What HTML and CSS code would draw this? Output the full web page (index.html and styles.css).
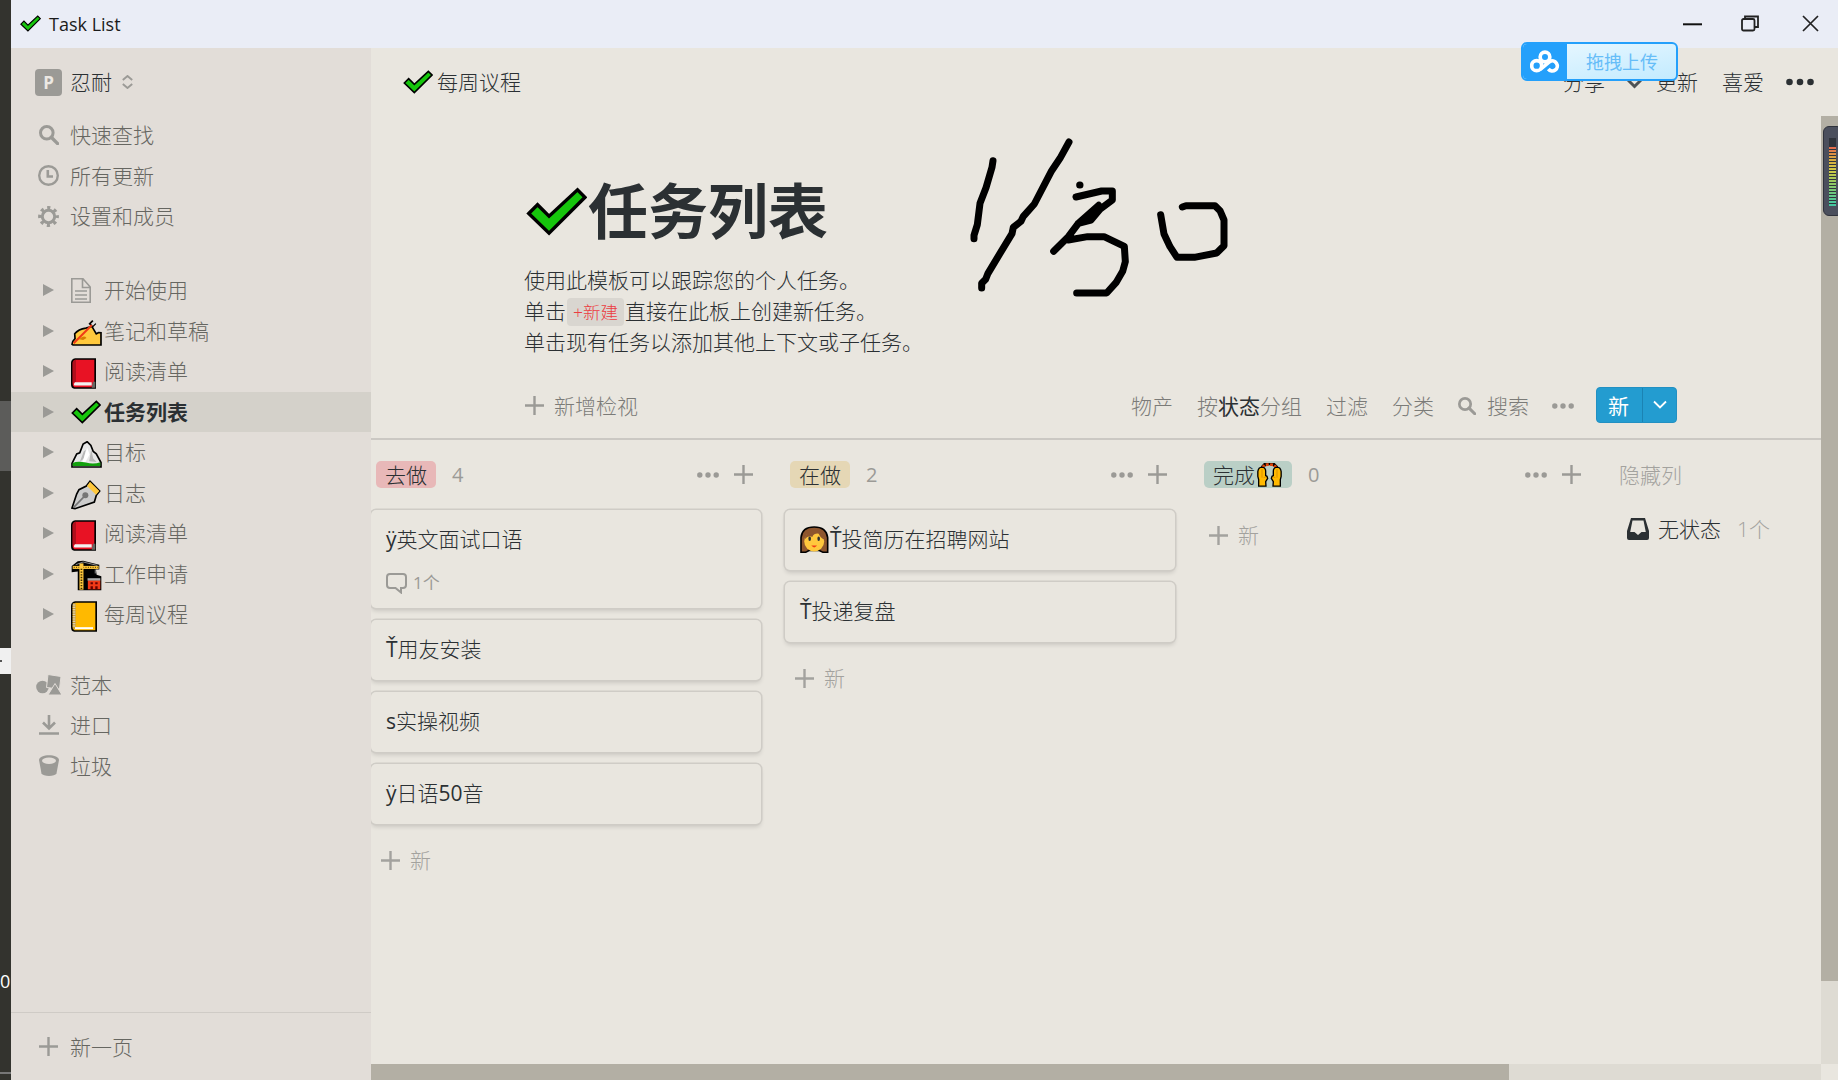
FILE: index.html
```html
<!DOCTYPE html>
<html lang="zh-CN">
<head>
<meta charset="utf-8">
<title>Task List</title>
<link rel="stylesheet" href="styles.css">
</head>
<body>
<svg class="defs" aria-hidden="true">
  <symbol id="check" viewBox="0 0 90 72"><path d="M4 39 17 26 34 43 76 4 87 15 34 68Z" fill="#16c60c" stroke="#000" stroke-width="5"/></symbol>
  <symbol id="plus" viewBox="0 0 19 19"><path d="M9.5 0V19M0 9.5H19" stroke="currentColor" stroke-width="2.4" fill="none"/></symbol>
  <symbol id="dots" viewBox="0 0 22 6"><circle cx="2.8" cy="3" r="2.7"/><circle cx="11" cy="3" r="2.7"/><circle cx="19.2" cy="3" r="2.7"/></symbol>
  <symbol id="search" viewBox="0 0 20 20"><circle cx="7.8" cy="7.8" r="6.3" fill="none" stroke="currentColor" stroke-width="3"/><path d="M12.3 12.3 18.6 18.6" stroke="currentColor" stroke-width="3.4" stroke-linecap="round"/></symbol>
  <symbol id="tri" viewBox="0 0 11 12"><path d="M0 0 11 6 0 12Z"/></symbol>
  <symbol id="book" viewBox="0 0 75 92"><path d="M13 2.5H72.500V89.500H10Q2.500 88 2.500 78V14Q3 4 13 2.500Z" fill="#e81224" stroke="#000" stroke-width="5"/><path d="M5 76V14Q6 6 15 5V71Q8 71 5 76Z" fill="#b00f1c"/><path d="M66 71h7v18h-11Z"/><path d="M12 72H62V82H10Q6 77 12 72Z" fill="#f2f2f2"/></symbol>
  <symbol id="notebook" viewBox="0 0 78 92"><path d="M13 2.500H75.500V89.500H10Q2.500 88 2.500 78V14Q3 4 13 2.500Z" fill="#ffb900" stroke="#000" stroke-width="5"/><path d="M10 6V84" stroke="#cfa030" stroke-width="9"/><path d="M9 10V76" stroke="#ddd" stroke-width="8" stroke-dasharray="3 4"/><path d="M12 78H66V84H12Z" fill="#fff"/></symbol>
  <symbol id="hand" viewBox="0 0 38 72" overflow="visible"><path d="M5 69.500V50L2.500 40V26Q4 13 15 12.500 26 14 26 24V38L30 40 32 46 26 56 27 69.500Z" fill="#ffb900" stroke="#000" stroke-width="4"/><path d="M15 18V44M20 44 26 42" stroke="#d48a00" stroke-width="2.500" fill="none"/></symbol>
</svg>

<div class="screen">
  <aside class="desktop">
    <div class="desk-block"></div>
    <div class="desk-note"></div>
    <div class="desk-count">0</div>
    <div class="desk-line"></div>
  </aside>

  <div class="window">
    <header class="titlebar">
      <svg class="tb-check"><use href="#check"/></svg>
      <span>Task List</span>
      <div class="controls">
        <svg width="19" height="16" viewBox="0 0 19 16"><path d="M0 8.300H19" stroke="#111" stroke-width="2"/></svg>
        <svg width="18" height="17" viewBox="0 0 18 17" fill="none" stroke="#222" stroke-width="1.800"><rect x="1" y="4" width="12.500" height="11.500" rx="1.500"/><path d="M4 4V1.500H17V12H13.500"/></svg>
        <svg width="17" height="17" viewBox="0 0 17 17"><path d="M1 1 16 16M16 1 1 16" stroke="#222" stroke-width="1.700"/></svg>
      </div>
    </header>

    <div class="app">
      <nav class="sidebar">
        <div class="user">
          <b class="avatar">P</b><span>忍耐</span>
          <svg width="11" height="14" viewBox="0 0 11 14" fill="none" stroke="#9b9a96" stroke-width="1.900"><path d="M.8 5 5.500 1 10.200 5M.8 9 5.500 13 10.200 9"/></svg>
        </div>
        <div class="group">
          <div class="row"><span class="ico"><svg width="20" height="20"><use href="#search"/></svg></span>快速查找</div>
          <div class="row"><span class="ico"><svg width="21" height="21" viewBox="0 0 21 21" fill="none" stroke="#9b9a96"><circle cx="10.500" cy="10.500" r="9.300" stroke-width="2.400"/><path d="M9.800 5V11.500H15" stroke-width="2.600"/></svg></span>所有更新</div>
          <div class="row"><span class="ico"><svg width="21" height="21" viewBox="0 0 21 21" fill="none" stroke="#9b9a96"><circle cx="10.500" cy="10.500" r="6.200" stroke-width="3"/><circle cx="10.500" cy="10.500" r="8.800" stroke-width="3.200" stroke-dasharray="3.200 3.710" stroke-dashoffset="1.600"/></svg></span>设置和成员</div>
        </div>
        <div class="group tree">
          <div class="row"><svg class="tri"><use href="#tri"/></svg><span class="emo"><svg width="20" height="25" viewBox="0 0 20 25" fill="none" stroke="#9b9a96" stroke-width="1.600"><path d="M.8.8H12L19.200 9V24.200H.8ZM11.500 1V9.500H19M4 13H16M4 17H16M4 21H16"/></svg></span>开始使用</div>
          <div class="row"><svg class="tri"><use href="#tri"/></svg><span class="emo"><svg width="31" height="27" viewBox="0 0 92 80"><path d="M3 75Q3 66 12 58L11 44Q22 30 44 27L62 22 75 44 82 40 89 41V77H6Z" fill="#ffc83d" stroke="#000" stroke-width="5"/><path d="M24 60Q38 46 46 56L36 62Z" fill="#d67d00"/><path d="M58 20 69 9" stroke="#000" stroke-width="17"/><path d="M8 72 62 18" stroke="#f03a17" stroke-width="6"/><path d="M62 17 71 8" stroke="#ddd" stroke-width="8"/></svg></span>笔记和草稿</div>
          <div class="row"><svg class="tri"><use href="#tri"/></svg><span class="emo"><svg width="25" height="31"><use href="#book"/></svg></span>阅读清单</div>
          <div class="row active"><svg class="tri"><use href="#tri"/></svg><span class="emo"><svg width="30" height="24"><use href="#check"/></svg></span>任务列表</div>
          <div class="row"><svg class="tri"><use href="#tri"/></svg><span class="emo"><svg width="31" height="27" viewBox="0 0 92 80"><path d="M3 66 17 38 26 35 36 9 48 2 59 13 66 31 75 38 89 64V77H3Z" fill="#e8e8e8" stroke="#000" stroke-width="5"/><path d="M38 30 44 26 38 52 26 62ZM60 25 66 52 76 62 54 60Z" fill="#b8b8b8"/><path d="M48 20 55 40 43 62H34Z" fill="#fff"/><path d="M5 65Q20 58 44 64T87 63V74H5Z" fill="#13a10e"/></svg></span>目标</div>
          <div class="row"><svg class="tri"><use href="#tri"/></svg><span class="emo"><svg width="30" height="30" viewBox="0 0 90 90"><path d="M3 84 17 42 24 29 46 18 57 4 86 33 76 46 70 66 12 86Z" fill="#ccc" stroke="#000" stroke-width="5"/><path d="M48 18 57 5 85 33 75 44Z" fill="#ffc83d"/><circle cx="43" cy="46" r="9" fill="#767676"/><path d="M43 46 8 82" stroke="#767676" stroke-width="5"/></svg></span>日志</div>
          <div class="row"><svg class="tri"><use href="#tri"/></svg><span class="emo"><svg width="25" height="31"><use href="#book"/></svg></span>阅读清单</div>
          <div class="row"><svg class="tri"><use href="#tri"/></svg><span class="emo"><svg width="31" height="31" viewBox="0 0 92 92"><path d="M2 18 20 4 36 2 84 14V28H74L76 44 90 48V90H20V34L2 36Z" fill="#000"/><path d="M5 22H82" stroke="#ffc83d" stroke-width="9"/><path d="M8 22H80" stroke="#6b4c00" stroke-width="4" stroke-dasharray="3 4"/><path d="M31 10V88" stroke="#ffc83d" stroke-width="12"/><path d="M31 26V86" stroke="#3b2b00" stroke-width="5" stroke-dasharray="4 4"/><path d="M14 14 36 6 78 16M72 28V40" stroke="#ccc" stroke-width="2" fill="none"/><path d="M50 60H87V87H50Z" fill="#f03a17"/><path d="M49 54H87V61H49Z" fill="#aaa"/><path d="M58 66h7v6h-7zM72 66h7v6h-7zM58 78h7v8h-7zM72 78h7v8h-7z" fill="#600"/></svg></span>工作申请</div>
          <div class="row"><svg class="tri"><use href="#tri"/></svg><span class="emo"><svg width="26" height="31"><use href="#notebook"/></svg></span>每周议程</div>
        </div>
        <div class="group tools">
          <div class="row"><span class="ico"><svg width="25" height="21" viewBox="0 0 25 21" fill="#9b9a96"><circle cx="6.500" cy="13" r="6.300"/><path d="M12 .5 25 2.500 23.500 15 10.500 13.500Z" stroke="#e2ddd8"/><path d="M19 9.500 26 21H12Z" stroke="#e2ddd8"/></svg></span>范本</div>
          <div class="row"><span class="ico"><svg width="20" height="20" viewBox="0 0 20 20" fill="none" stroke="#9b9a96" stroke-width="2.600"><path d="M10 0V13M4 7.500 10 13.500 16 7.500M0 18.500H20"/></svg></span>进口</div>
          <div class="row"><span class="ico"><svg width="20" height="21" viewBox="0 0 20 21"><path d="M0 5C0-1.500 20-1.500 20 5L17.500 18.500C16 21.700 4 21.700 2.500 18.500Z" fill="#9b9a96"/><ellipse cx="10" cy="5.700" rx="7" ry="3.200" fill="#e2ddd8"/></svg></span>垃圾</div>
        </div>
        <div class="new-page"><svg width="19" height="19"><use href="#plus"/></svg>新一页</div>
      </nav>

      <main class="main">
        <div class="topbar">
          <svg width="30" height="24"><use href="#check"/></svg><span class="crumb">每周议程</span>
          <div class="actions">
            <span>分享</span>
            <svg width="17" height="11" viewBox="0 0 17 11"><path d="M2 2 8.500 8.500 15 2" fill="none" stroke="#4e5254" stroke-width="3"/></svg>
            <span>更新</span><span class="fav">喜爱</span>
            <svg width="28" height="8" viewBox="0 0 28 8"><circle cx="3.500" cy="4" r="3.300"/><circle cx="14" cy="4" r="3.300"/><circle cx="24.500" cy="4" r="3.300"/></svg>
          </div>
        </div>

        <div class="scroll">
          <div class="content">
            <section class="intro">
              <h1><svg width="61" height="49"><use href="#check"/></svg>任务列表</h1>
              <p>使用此模板可以跟踪您的个人任务。</p>
              <p>单击<code>+新建</code>直接在此板上创建新任务。</p>
              <p>单击现有任务以添加其他上下文或子任务。</p>
            </section>

            <div class="toolbar">
              <div class="add"><svg width="19" height="19"><use href="#plus"/></svg>新增检视</div>
              <div class="filters">
                <span>物产</span><span>按<em>状态</em>分组</span><span>过滤</span><span>分类</span>
                <span class="find"><svg width="18" height="18"><use href="#search"/></svg>搜索</span>
                <svg class="more" width="22" height="6"><use href="#dots"/></svg>
                <div class="new"><span>新</span><i><svg width="14" height="9" viewBox="0 0 14 9"><path d="M1 1.500 7 7.500 13 1.500" fill="none" stroke="#fff" stroke-width="1.800"/></svg></i></div>
              </div>
            </div>

            <div class="board">
              <section class="col">
                <header><span class="tag red">去做</span><span class="n">4</span><svg class="dots"><use href="#dots"/></svg><svg width="19" height="19"><use href="#plus"/></svg></header>
                <article class="card"><b>ÿ</b>英文面试口语
                  <footer><svg width="21" height="21" viewBox="0 0 21 21" fill="none" stroke="#9b9a96" stroke-width="2"><path d="M4 1H17Q20 1 20 4V12Q20 15 17 15H15V19.500L9.500 15H4Q1 15 1 12V4Q1 1 4 1Z"/></svg>1个</footer>
                </article>
                <article class="card"><b>Ť</b>用友安装</article>
                <article class="card"><b>s</b>实操视频</article>
                <article class="card"><b>ÿ</b>日语<b>50</b>音</article>
                <div class="more-row"><svg width="19" height="19"><use href="#plus"/></svg>新</div>
              </section>
              <section class="col">
                <header><span class="tag yellow">在做</span><span class="n">2</span><svg class="dots"><use href="#dots"/></svg><svg width="19" height="19"><use href="#plus"/></svg></header>
                <article class="card"><svg class="girl" width="29" height="27" viewBox="0 0 90 84"><path d="M3 82V36Q6 3 44 3T86 36V82H72L60 76H28L17 82Z" fill="#8e562e" stroke="#000" stroke-width="5"/><ellipse cx="44" cy="48" rx="31" ry="31" fill="#ffc83d"/><path d="M14 42Q20 14 44 14T76 42Q64 38 58 24 44 22 38 34 26 28 14 42Z" fill="#8e562e"/><ellipse cx="30" cy="40" rx="4" ry="7"/><ellipse cx="58" cy="40" rx="4" ry="7"/><path d="M35 61H53Q44 72 35 61Z" fill="#f03a17"/></svg><b>Ť</b>投简历在招聘网站</article>
                <article class="card"><b>Ť</b>投递复盘</article>
                <div class="more-row"><svg width="19" height="19"><use href="#plus"/></svg>新</div>
              </section>
              <section class="col">
                <header><span class="tag green">完成<svg width="25" height="24" viewBox="0 0 75 72"><path d="M15 14 24 4 36 1 50 4 60 14" fill="none" stroke="#000" stroke-width="10"/><path d="M16 13 24 6 36 4 50 6 58 13" fill="none" stroke="#e0450a" stroke-width="8" stroke-dasharray="9 4"/><use href="#hand" width="38" height="72"/><use href="#hand" width="38" height="72" transform="matrix(-1 0 0 1 75 0)"/></svg></span><span class="n">0</span><svg class="dots"><use href="#dots"/></svg><svg width="19" height="19"><use href="#plus"/></svg></header>
                <div class="more-row"><svg width="19" height="19"><use href="#plus"/></svg>新</div>
              </section>
              <section class="hidden-col">
                <h2>隐藏列</h2>
                <div class="none"><svg width="22" height="22" viewBox="0 0 22 22"><path d="M4 0H18L22 13V20Q22 22 20 22H2Q0 22 0 20V13ZM5.500 2.500 3.200 14H7.500L11 17 14.500 14H18.800L16.500 2.500Z" fill="#2b3033" fill-rule="evenodd"/></svg>无状态<span>1个</span></div>
              </section>
            </div>
          </div>
          <div class="vbar"><i></i></div>
          <div class="hbar"><i></i></div>
          <div class="corner"></div>
        </div>
      </main>
    </div>
  </div>

  <svg class="ink" viewBox="0 0 960 600" fill="none" stroke="#000" stroke-width="21" stroke-linecap="round" stroke-linejoin="round">
    <path d="M159 152 156 172 138 233 120 280 112 344 102 376V386"/>
    <path d="M387 96 360 145 335 182 283 282 250 319 243 334 220 352 216 371 180 430 144 490 137 508 125 520V534"/>
    <path d="M419 225H420M408 261 485 243H517V270L480 298 453 330 415 340M476 286 415 340 385 380 341 424M385 390 443 380H492L553 409 556 455 548 484 528 518 500 549H410"/>
    <path d="M662 314 672 372 690 410 711 442H763L830 429 852 407V330L840 302 825 287H738L727 291"/>
  </svg>

  <div class="upload">
    <div class="cloud"><svg width="30" height="24" viewBox="0 0 90 72" fill="none" stroke="#fff" stroke-width="11"><circle cx="45" cy="21" r="14.500"/><circle cx="20" cy="47" r="15"/><path d="M31 58 59 35A15 15 0 1 1 55 57"/></svg></div>
    <span>拖拽上传</span>
  </div>

  <div class="meter"><i></i></div>
</div>
</body>
</html>
```
FILE: styles.css
```css
* { box-sizing: border-box; }
body {
  margin: 0;
  font-family: "Open Sans", "Noto Sans CJK SC", sans-serif;
  font-size: 21px;
  font-weight: 300;
  line-height: 30px;
  color: #2b3033;
}
svg { display: block; flex: none; }
svg:not([fill]) { fill: currentColor; }
.defs { position: absolute; width: 0; height: 0; }
.screen { position: relative; display: flex; width: 1838px; height: 1080px; overflow: hidden; background: #e9e6df; }

/* sliver of the desktop behind the window */
.desktop { width: 11px; background: #33332e; overflow: hidden; }
.desk-block { height: 70px; margin-top: 401px; background: #5c5c5a; }
.desk-note { height: 26px; margin-top: 177px; background: #f0f0f0 linear-gradient(#555, #555) 0 12px / 2px 2px no-repeat; }
.desk-count { margin-top: 292px; color: #fff; font-size: 18px; font-weight: 400; }
.desk-line { height: 2px; margin-top: 76px; background: #777; }

.window { flex: 1; display: flex; flex-direction: column; }
.titlebar { display: flex; align-items: center; height: 48px; padding: 0 19px 1px 9px; background: #eaedf6; font-size: 18px; font-weight: 400; color: #1b1b1b; }
.titlebar span { margin-left: 8px; }
.tb-check { width: 21px; height: 17px; }
.controls { display: flex; align-items: center; margin-left: auto; }
.controls svg + svg { margin-left: 39px; }
.controls svg + svg + svg { margin-left: 43px; }

.app { flex: 1; display: flex; min-height: 0; }
.sidebar { display: flex; flex-direction: column; width: 360px; background: #e2ddd8; color: #666661; }
.user { display: flex; align-items: center; height: 67px; padding: 1px 0 0 24px; color: #2b3033; }
.user span { margin: 0 10px 0 8px; }
.avatar { width: 27px; height: 27px; border-radius: 4px; background: #9b9a96; color: #ece8e3; text-align: center; font-size: 17px; line-height: 28px; font-weight: 700; }
.row { display: flex; align-items: center; height: 40.5px; }
.ico { display: flex; justify-content: center; width: 25px; margin: 0 9px 0 25px; color: #9b9a96; }
.tree { margin-top: 33.5px; }
.tree .row { padding-left: 32px; }
.tri { width: 11px; height: 12px; color: #9b9a96; }
.emo { width: 33px; margin-left: 17px; }
.emo svg { position: relative; top: 2px; }
.row:first-child .emo svg, .active .emo svg { top: 0; }
.active { background: #d4d1ca; color: #2b3033; font-weight: 700; }
.tools { margin-top: 30px; }
.new-page { display: flex; align-items: center; height: 68px; margin-top: auto; padding-left: 28px; border-top: 1px solid #cfcbc6; }
.new-page svg { margin-right: 12px; color: #9b9a96; }

.main { flex: 1; display: flex; flex-direction: column; min-width: 0; }
.topbar { display: flex; align-items: center; height: 68px; padding: 0 24px 0 32px; }
.crumb { margin-left: 4px; }
.actions { display: flex; align-items: center; margin-left: auto; }
.actions svg:nth-of-type(1) { margin: 2px 13px 0 21px; }
.fav { margin: 0 22px 0 24px; }

.scroll { flex: 1; display: grid; grid-template-columns: 1450px 17px; grid-template-rows: 948px 16px; }
.content { overflow: hidden; }
.intro { height: 261px; padding: 50px 0 0 153px; }
h1 { display: flex; align-items: center; margin: 0 0 22px; font-size: 60px; line-height: 90px; height: 90px; font-weight: 700; }
h1 svg { margin: 0 1px 0 2px; }
p { margin: 0; line-height: 31px; height: 31px; }
h1 + p { margin-top: -13px; }
code { padding: 2px 6px; margin: 0 1px; border-radius: 4px; background: #d9d6d0; color: #eb3d42; font-family: "Open Sans", "Noto Sans CJK SC", sans-serif; font-size: 17.5px; }

.toolbar { display: flex; align-items: center; justify-content: space-between; height: 63px; padding: 0 144px 4px 154px; border-bottom: 2px solid #cbc8c3; color: #7b7b78; }
.add, .find, .filters { display: flex; align-items: center; }
.add svg { margin-right: 10px; color: #9b9a96; }
.filters > span { margin-right: 24px; }
.filters em { font-style: normal; font-weight: 400; color: #2b3033; }
.find svg { margin-right: 11px; color: #9b9a96; }
.filters .find { margin-right: 23px; }
.more { margin-right: 22px; color: #9b9a96; }
.new { display: flex; width: 81px; height: 36px; margin-top: -2px; border: 1px solid #2290c2; border-radius: 4px; background: #239cd0; color: #fff; }
.new span { width: 45px; padding-right: 2px; text-align: center; line-height: 36px; font-weight: 400; }
.new i { flex: 1; display: flex; align-items: center; justify-content: center; border-left: 1px solid #1b83b3; }

.board { display: flex; height: 624px; }
.col { width: 414px; flex: none; padding-right: 22px; margin-left: -1px; }
.col + .col { margin-left: 0; }
.col header { display: flex; align-items: center; height: 69px; padding: 0 9px 0 6px; color: #9b9a96; }
.tag { display: flex; align-items: center; height: 27px; padding: 0 9px; border-radius: 5px; color: #2b3033; }
.tag svg { margin: 0 1px 0 2px; }
.red { background: #e8b8b8; }
.yellow { background: #e5d7b5; }
.green { background: #bacfc6; }
.n { margin: 0 auto 0 16px; font-weight: 400; font-size: 20px; }
.dots { width: 22px; height: 6px; margin-right: 15px; }
.card { height: 60px; margin: 1px 1px 11px; padding: 14px 15px; border-radius: 5px; background: #e9e6df; box-shadow: 0 0 0 1.5px #cfccc6, 0 3px 4px rgba(0, 0, 0, .13); white-space: nowrap; }
.card + .card { margin-top: 12px; }
.card b { font-weight: 500; }
.card:has(footer) { height: 98px; }
.card footer { display: flex; align-items: center; gap: 6px; height: 30px; margin-top: 14px; color: #9b9a96; font-size: 17px; font-weight: 400; }
.girl { display: inline-block; margin-right: 1px; vertical-align: -6px; }
.more-row { display: flex; align-items: center; height: 50px; padding-left: 11px; color: #a3a29e; }
header + .more-row { margin-top: 1px; }
.more-row svg { margin-right: 10px; }
.hidden-col { padding-left: 7px; flex: none; width: 209px; }
h2 { margin: 0; height: 69px; font-size: 21px; font-weight: 300; line-height: 71px; color: #a3a29e; }
.none { display: flex; align-items: center; height: 40px; padding-left: 8px; }
.none svg { margin-right: 9px; }
.none span { margin-left: 16px; color: #a3a29e; }

.vbar, .hbar { background: #dedbd3; }
.vbar i, .hbar i { display: block; background: #b3afa4; }
.vbar i { height: 865px; }
.hbar i { width: 1138px; height: 16px; }

/* layers floating above the window */
.ink { position: absolute; left: 940px; top: 110px; width: 320px; height: 200px; }
.upload { position: absolute; left: 1521px; top: 42px; display: flex; width: 157px; height: 39px; border: 2px solid #24a0fb; border-radius: 6px; background: linear-gradient(170deg, #eaf8ff, #c3ebff); overflow: hidden; color: #66bdf8; font-size: 18px; font-weight: 400; }
.cloud { display: flex; align-items: center; justify-content: center; width: 44px; background: #24a0fb; }
.upload span { margin-left: 19px; line-height: 36px; }
.meter { position: absolute; left: 1823px; top: 126px; width: 20px; height: 90px; padding: 11px 0 0 5px; border: 1px solid #2f323c; border-radius: 6px; background: #4b4f5d; }
.meter i { display: block; width: 7px; height: 68px; background: repeating-linear-gradient(transparent 0 2px, #30343c 2px 3px), linear-gradient(#30343c 0 9px, #e4694f 9px, #d8a540 20px, #d2c945 32px, #8fc866 46px, #45c7a0 66px); }
```
